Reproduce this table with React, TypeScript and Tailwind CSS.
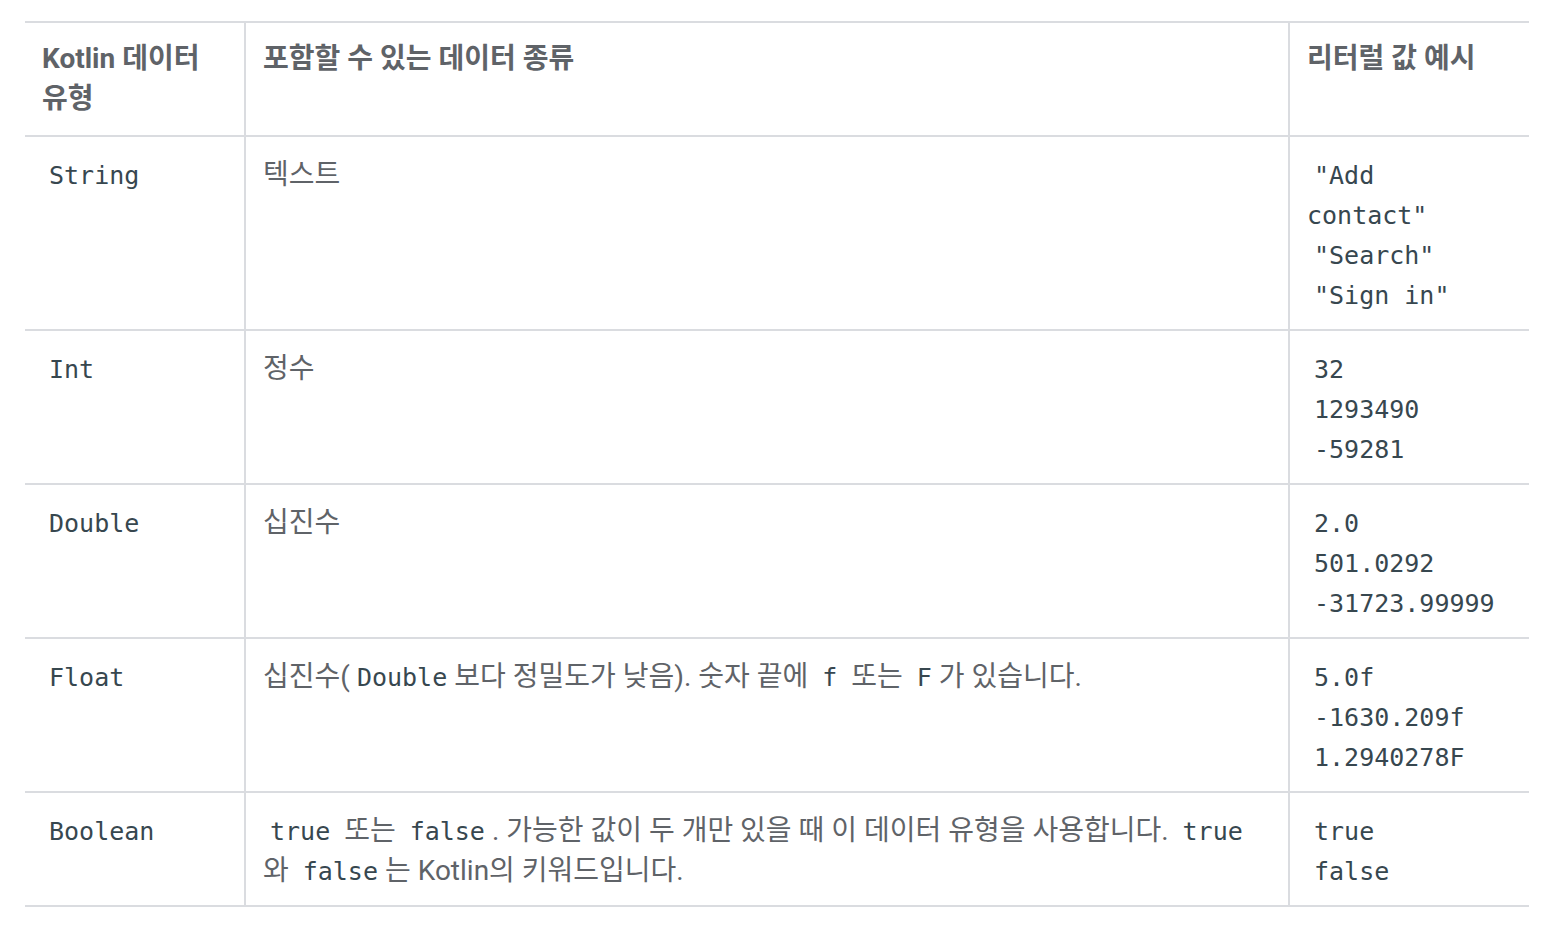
import React from 'react';

type Part = string | { code: string };

const Code = ({ children }: { children: React.ReactNode }) => (
  <code className="px-[7px] text-[25px] leading-[20px] text-[#37474f] [font-family:'DejaVu_Sans_Mono','Liberation_Mono',monospace] [box-decoration-break:slice]">
    {children}
  </code>
);

const rows: { type: string; desc: Part[]; examples: string[] }[] = [
  { type: 'String', desc: ['텍스트'], examples: ['"Add contact"', '"Search"', '"Sign in"'] },
  { type: 'Int', desc: ['정수'], examples: ['32', '1293490', '-59281'] },
  { type: 'Double', desc: ['십진수'], examples: ['2.0', '501.0292', '-31723.99999'] },
  {
    type: 'Float',
    desc: ['십진수(', { code: 'Double' }, '보다 정밀도가 낮음). 숫자 끝에 ', { code: 'f' }, ' 또는 ', { code: 'F' }, '가 있습니다.'],
    examples: ['5.0f', '-1630.209f', '1.2940278F'],
  },
  {
    type: 'Boolean',
    desc: [
      { code: 'true' },
      ' 또는 ',
      { code: 'false' },
      '. 가능한 값이 두 개만 있을 때 이 데이터 유형을 사용합니다. ',
      { code: 'true' },
      ' 와 ',
      { code: 'false' },
      '는 Kotlin의 키워드입니다.',
    ],
    examples: ['true', 'false'],
  },
];

function App() {
  return (
    <div className="min-h-screen bg-white pt-[21px] pl-[25px] text-[28px] leading-[40px] text-[#5f6368] [word-break:keep-all] [font-family:Roboto,'Noto_Sans_CJK_KR',sans-serif]">
      <table className="w-[1504px] table-fixed border-collapse border-t-2 border-[#dadce0]">
        <colgroup>
          <col className="w-[220px]" />
          <col className="w-[1044px]" />
          <col className="w-[240px]" />
        </colgroup>
        <thead>
          <tr className="border-b-2 border-[#dadce0]">
            <th className="px-[17px] py-[16px] text-left align-top font-bold">Kotlin 데이터 유형</th>
            <th className="border-x-2 border-[#dadce0] px-[17px] py-[16px] text-left align-top font-bold">
              포함할 수 있는 데이터 종류
            </th>
            <th className="px-[17px] py-[16px] text-left align-top font-bold">리터럴 값 예시</th>
          </tr>
        </thead>
        <tbody>
          {rows.map((r) => (
            <tr key={r.type} className="border-b-2 border-[#dadce0]">
              <td className="px-[17px] pt-[18px] pb-[14px] align-top">
                <Code>{r.type}</Code>
              </td>
              <td className="border-x-2 border-[#dadce0] px-[17px] pt-[18px] pb-[14px] align-top">
                {r.desc.map((p, i) => (typeof p === 'string' ? <span key={i}>{p}</span> : <Code key={i}>{p.code}</Code>))}
              </td>
              <td className="px-[17px] pt-[18px] pb-[14px] align-top">
                {r.examples.map((e, i) => (
                  <React.Fragment key={i}>
                    <Code>{e}</Code>
                    {i < r.examples.length - 1 && <br />}
                  </React.Fragment>
                ))}
              </td>
            </tr>
          ))}
        </tbody>
      </table>
    </div>
  );
}

export default App;
